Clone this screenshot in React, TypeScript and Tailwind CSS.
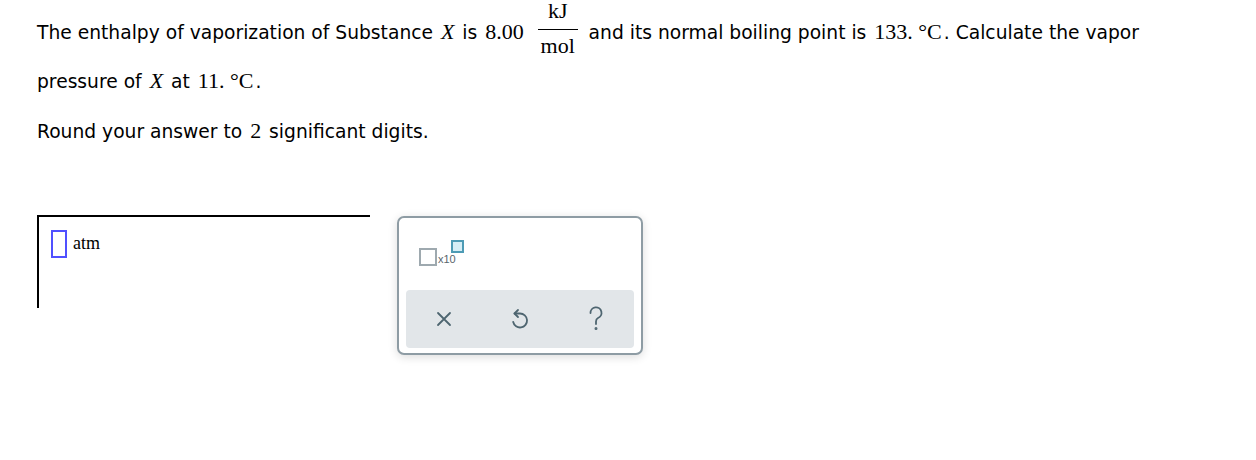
import React from "react";

function M({ children, i }: { children: React.ReactNode; i?: boolean }) {
  return (
    <span className={"px-[2px] font-['Liberation_Serif',serif] text-[22px] " + (i ? "italic" : "")}>
      {children}
    </span>
  );
}

function Frac() {
  return (
    <span className="inline-block align-[-14px] text-center font-['Liberation_Serif',serif] text-[22px] ml-[6px] mr-[5px]">
      <span className="block leading-[22px]">kJ</span>
      <span className="block h-px bg-black mt-[7px] w-[40px]" />
      <span className="block leading-[22px] mt-[5px]">mol</span>
    </span>
  );
}

export default function App() {
  return (
    <div className="w-[1256px] h-[460px] bg-white text-black font-['DejaVu_Sans',Verdana,sans-serif] text-[18.7px]">
      <div className="pl-[37px]">
        <div className="leading-[24px] whitespace-nowrap">
          The enthalpy of vaporization of Substance <M i>X</M> is <M>8.00</M> <Frac /> and its normal boiling
          point is <M>133. °C</M>. Calculate the vapor
        </div>
        <div className="leading-[24px] mt-[12px] whitespace-nowrap">
          pressure of <M i>X</M> at <M>11. °C</M>.
        </div>
        <div className="leading-[24px] mt-[25px] whitespace-nowrap">
          Round your answer to <M>2</M> significant digits.
        </div>

        <div className="flex items-start mt-[71px]">
          <div className="w-[333px] h-[93px] border-t-2 border-l-2 border-black">
            <div className="flex items-start pl-[12px] pt-[13px]">
              <div className="w-[16px] h-[28px] border-2 border-[#5050ff]" />
              <span className="ml-[6px] mt-[3px] font-['Liberation_Serif',serif] text-[18px] leading-[20px]">
                atm
              </span>
            </div>
          </div>

          <div className="ml-[27px] mt-[1px] w-[246px] h-[139px] border-2 border-[#8e9ca4] rounded-[7px] bg-white shadow-[0_2px_10px_rgba(0,0,0,0.14)] flex flex-col">
            <div className="h-[72px] pl-[20px] pt-[22px]">
              <div className="flex items-start">
                <div className="mt-[8px] w-[18px] h-[18px] border-2 border-[#9ea9af]" />
                <span className="mt-[13px] ml-[1px] text-[11px] leading-[12px] text-[#5a666d] font-['Liberation_Sans',Arial,sans-serif]">
                  x10
                </span>
                <div className="w-[13px] h-[13px] border-2 border-[#4d9bb5] bg-[#d5eef6] -ml-[5px]" />
              </div>
            </div>
            <div className="mx-[7px] h-[58px] rounded-[4px] bg-[#e2e6e9] grid grid-cols-3 items-center justify-items-center">
              <svg width="16" height="16" viewBox="0 0 16 16" fill="none" stroke="#4e6570" strokeWidth="1.8" strokeLinecap="round">
                <path d="M2 2 L14 14 M14 2 L2 14" />
              </svg>
              <svg width="20" height="24" viewBox="0 0 20 24" fill="none" stroke="#4e6570" strokeWidth="1.8" strokeLinecap="round" strokeLinejoin="round">
                <path d="M8 3 L4.5 6.5 L8 10" />
                <path d="M4.5 6.5 H10 A7 7 0 1 1 3.2 15" />
              </svg>
              <svg width="18" height="26" viewBox="0 0 18 26" fill="none" stroke="#4e6570" strokeWidth="1.8" strokeLinecap="round">
                <path d="M3.5 7 A5.5 5.5 0 1 1 11 12 C9.6 12.8 9 13.8 9 15.5 V18" />
                <circle cx="9" cy="22.5" r="0.6" fill="#4e6570" />
              </svg>
            </div>
          </div>
        </div>
      </div>
    </div>
  );
}
